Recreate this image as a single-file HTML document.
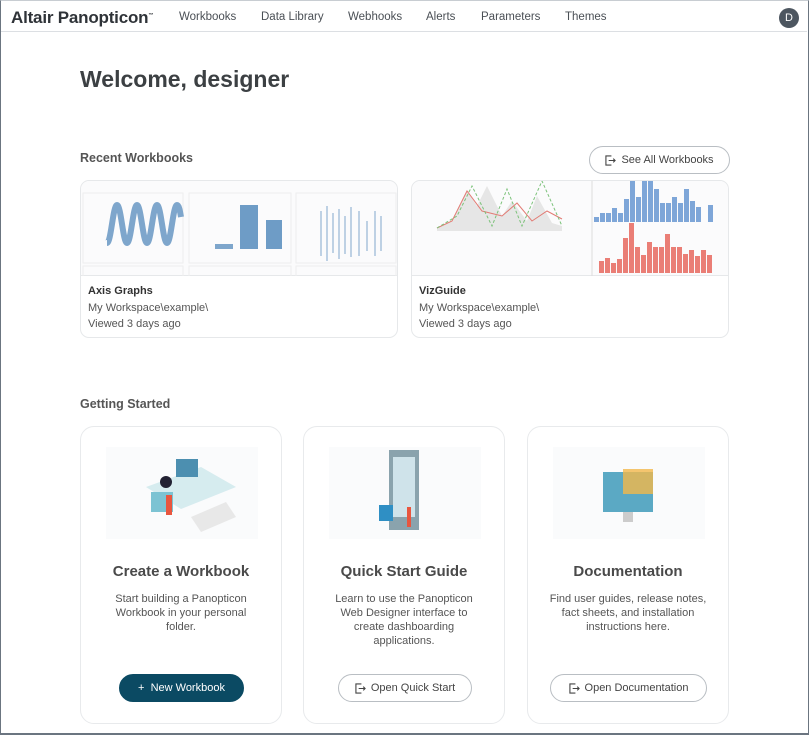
<!DOCTYPE html>
<html><head><meta charset="utf-8"><style>
*{box-sizing:border-box;margin:0;padding:0}
body{width:809px;height:735px;overflow:hidden;background:#fff;font-family:"Liberation Sans",sans-serif;color:#555;position:relative}
.frame{position:absolute;left:0;top:0;width:809px;height:735px;border:1px solid #6b7580;border-top:1px solid #c8cdd2;border-bottom:2px solid #6b7580}
.nav{position:absolute;left:1px;top:1px;width:806px;height:31px;border-bottom:1px solid #dcdfe3}
.logo{position:absolute;left:10px;top:7px;font-size:17px;font-weight:bold;color:#2f3338;letter-spacing:-0.2px}
.nav a{position:absolute;top:10px;font-size:11.5px;color:#4a4f55;text-decoration:none}
.av{position:absolute;left:778px;top:7px;width:20px;height:20px;border-radius:50%;background:#4d5660;color:#fff;font-size:11px;text-align:center;line-height:20px}
h1{position:absolute;left:80px;top:66px;font-size:23px;color:#3c4043;font-weight:bold}
.h2{position:absolute;left:80px;font-size:12.5px;font-weight:bold;color:#555}
.btn{position:absolute;border:1px solid #b9bec3;border-radius:14px;font-size:11px;color:#444;display:flex;align-items:center;justify-content:center;gap:5px;background:#fff}
.ic{width:11px;height:11px}
.card{position:absolute;border:1px solid #e6e8ea;border-radius:9px;overflow:hidden;background:#fff}
.thumb{height:95px;border-bottom:1px solid #e6e8ea;background:#fbfbfc;position:relative}
.ct{position:absolute;left:7px;font-size:11px}
.gs{position:absolute;top:426px;width:202px;height:298px;border:1px solid #e8eaec;border-radius:14px;text-align:center}
.gs h3{position:absolute;top:136px;width:100%;font-size:15px;color:#4a4a4a}
.gs p{position:absolute;top:165px;left:0;right:0;font-size:11px;line-height:14px;color:#555;white-space:nowrap}
.ill{position:absolute;left:25px;top:20px;width:152px;height:92px;background:#fafbfc}
</style></head><body>
<div class="nav">
<div class="logo">Altair Panopticon<sup style="font-size:5px">™</sup></div>
<a style="left:178px">Workbooks</a><a style="left:260px">Data Library</a><a style="left:347px">Webhooks</a><a style="left:425px">Alerts</a><a style="left:480px">Parameters</a><a style="left:564px">Themes</a>
<div class="av">D</div>
</div>
<h1>Welcome, designer</h1>
<div class="h2" style="top:151px">Recent Workbooks</div>
<div class="btn" style="left:589px;top:146px;width:141px;height:28px"><svg class="ic" viewBox="0 0 12 12" fill="none" stroke="#444" stroke-width="1.2"><path d="M7 1H1v10h6M4 6h7M9 4l2 2-2 2"/></svg>See All Workbooks</div>

<div class="card" style="left:80px;top:180px;width:318px;height:158px">
<div class="thumb"><svg width="318" height="95">
<g fill="none" stroke="#eee"><rect x="2" y="12" width="100" height="70"/><rect x="108" y="12" width="102" height="70"/><rect x="215" y="12" width="100" height="70"/></g>
<g fill="none" stroke="#eee"><rect x="2" y="85" width="100" height="12"/><rect x="108" y="85" width="102" height="12"/><rect x="215" y="85" width="100" height="12"/></g>
<path d="M26 62 C30 62 32 24 36 24 C40 24 42 62 46 62 C50 62 52 24 56 24 C60 24 62 62 66 62 C70 62 72 24 76 24 C80 24 82 62 86 62 C90 62 92 24 96 24 C98 24 99 30 100 36" stroke="#7ea6cc" stroke-width="6" fill="none"/>
<rect x="134" y="63" width="18" height="5" fill="#7ea6cc"/><rect x="159" y="24" width="18" height="44" fill="#6e9cc6"/><rect x="185" y="39" width="16" height="29" fill="#6e9cc6"/>
<g stroke="#a9c3dd" stroke-width="1.5"><path d="M240 30v45M246 25v55M252 32v40M258 28v50M264 35v38M270 26v50M278 30v45M286 40v30M294 30v45M300 35v35"/></g>
</svg></div>
<div class="ct" style="top:104px;font-weight:bold;color:#333">Axis Graphs</div>
<div class="ct" style="top:121px">My Workspace\example\</div>
<div class="ct" style="top:137px">Viewed 3 days ago</div>
</div>

<div class="card" style="left:411px;top:180px;width:318px;height:158px">
<div class="thumb"><svg width="318" height="95">
<path d="M25 47 L40 40 L55 10 L65 25 L75 5 L90 35 L100 20 L115 40 L125 15 L140 42 L150 45 L150 50 L25 50Z" fill="#e6e6e6"/>
<path d="M25 47 L40 40 L55 10 L70 30 L90 35 L105 22 L120 40 L135 30 L150 38" stroke="#e27b74" fill="none"/>
<path d="M25 47 L45 35 L60 5 L80 45 L95 8 L110 45 L130 0 L150 45" stroke="#7cc27a" fill="none" stroke-dasharray="3 2"/>
<line x1="180" y1="0" x2="180" y2="95" stroke="#ddd"/>
<g fill="#7ea6d8"><rect x="182" y="36" width="5" height="5"/><rect x="188" y="32" width="5" height="9"/><rect x="194" y="32" width="5" height="9"/><rect x="200" y="27" width="5" height="14"/><rect x="206" y="32" width="5" height="9"/><rect x="212" y="18" width="5" height="23"/><rect x="218" y="0" width="5" height="41"/><rect x="224" y="16" width="5" height="25"/><rect x="230" y="0" width="5" height="41"/><rect x="236" y="0" width="5" height="41"/><rect x="242" y="8" width="5" height="33"/><rect x="248" y="22" width="5" height="19"/><rect x="254" y="22" width="5" height="19"/><rect x="260" y="16" width="5" height="25"/><rect x="266" y="22" width="5" height="19"/><rect x="272" y="8" width="5" height="33"/><rect x="278" y="20" width="5" height="21"/><rect x="284" y="26" width="5" height="15"/><rect x="296" y="24" width="5" height="17"/></g>
<g fill="#ea7e76"><rect x="187" y="80" width="5" height="12"/><rect x="193" y="77" width="5" height="15"/><rect x="199" y="82" width="5" height="10"/><rect x="205" y="78" width="5" height="14"/><rect x="211" y="57" width="5" height="35"/><rect x="217" y="42" width="5" height="50"/><rect x="223" y="66" width="5" height="26"/><rect x="229" y="74" width="5" height="18"/><rect x="235" y="61" width="5" height="31"/><rect x="241" y="66" width="5" height="26"/><rect x="247" y="66" width="5" height="26"/><rect x="253" y="53" width="5" height="39"/><rect x="259" y="66" width="5" height="26"/><rect x="265" y="66" width="5" height="26"/><rect x="271" y="73" width="5" height="19"/><rect x="277" y="69" width="5" height="23"/><rect x="283" y="75" width="5" height="17"/><rect x="289" y="69" width="5" height="23"/><rect x="295" y="74" width="5" height="18"/></g>
</svg></div>
<div class="ct" style="top:104px;font-weight:bold;color:#333">VizGuide</div>
<div class="ct" style="top:121px">My Workspace\example\</div>
<div class="ct" style="top:137px">Viewed 3 days ago</div>
</div>

<div class="h2" style="top:397px">Getting Started</div>

<div class="gs" style="left:80px">
<div class="ill"><svg width="152" height="92"><path d="M40 40 L95 20 L130 40 L75 62Z" fill="#d6ecef"/><rect x="70" y="12" width="22" height="18" fill="#4c8fb0"/><rect x="45" y="45" width="22" height="20" fill="#7cc3d3"/><path d="M85 70 L120 55 L130 70 L95 85Z" fill="#e8e8e8"/><circle cx="60" cy="35" r="6" fill="#223"/><rect x="60" y="48" width="6" height="20" fill="#e8563f"/></svg></div>
<h3>Create a Workbook</h3>
<p>Start building a Panopticon<br>Workbook in your personal<br>folder.</p>
<div class="btn" style="left:38px;top:247px;width:125px;height:28px;background:#0b4a63;border-color:#0b4a63;color:#fff">+&nbsp; New Workbook</div>
</div>

<div class="gs" style="left:303px">
<div class="ill"><svg width="152" height="92"><rect x="60" y="3" width="30" height="80" fill="#8aa3ad"/><rect x="64" y="10" width="22" height="60" fill="#cfe3ea"/><rect x="50" y="58" width="14" height="16" fill="#2f8fc4"/><rect x="78" y="60" width="4" height="20" fill="#e8563f"/></svg></div>
<h3>Quick Start Guide</h3>
<p>Learn to use the Panopticon<br>Web Designer interface to<br>create dashboarding<br>applications.</p>
<div class="btn" style="left:34px;top:247px;width:134px;height:28px"><svg class="ic" viewBox="0 0 12 12" fill="none" stroke="#444" stroke-width="1.2"><path d="M7 1H1v10h6M4 6h7M9 4l2 2-2 2"/></svg>Open Quick Start</div>
</div>

<div class="gs" style="left:527px">
<div class="ill"><svg width="152" height="92"><rect x="50" y="25" width="50" height="40" fill="#5ba9c4"/><rect x="70" y="22" width="30" height="25" fill="#f2b84a" opacity=".8"/><rect x="70" y="65" width="10" height="10" fill="#ccc"/></svg></div>
<h3>Documentation</h3>
<p>Find user guides, release notes,<br>fact sheets, and installation<br>instructions here.</p>
<div class="btn" style="left:22px;top:247px;width:157px;height:28px"><svg class="ic" viewBox="0 0 12 12" fill="none" stroke="#444" stroke-width="1.2"><path d="M7 1H1v10h6M4 6h7M9 4l2 2-2 2"/></svg>Open Documentation</div>
</div>
<div class="frame"></div>
</body></html>
